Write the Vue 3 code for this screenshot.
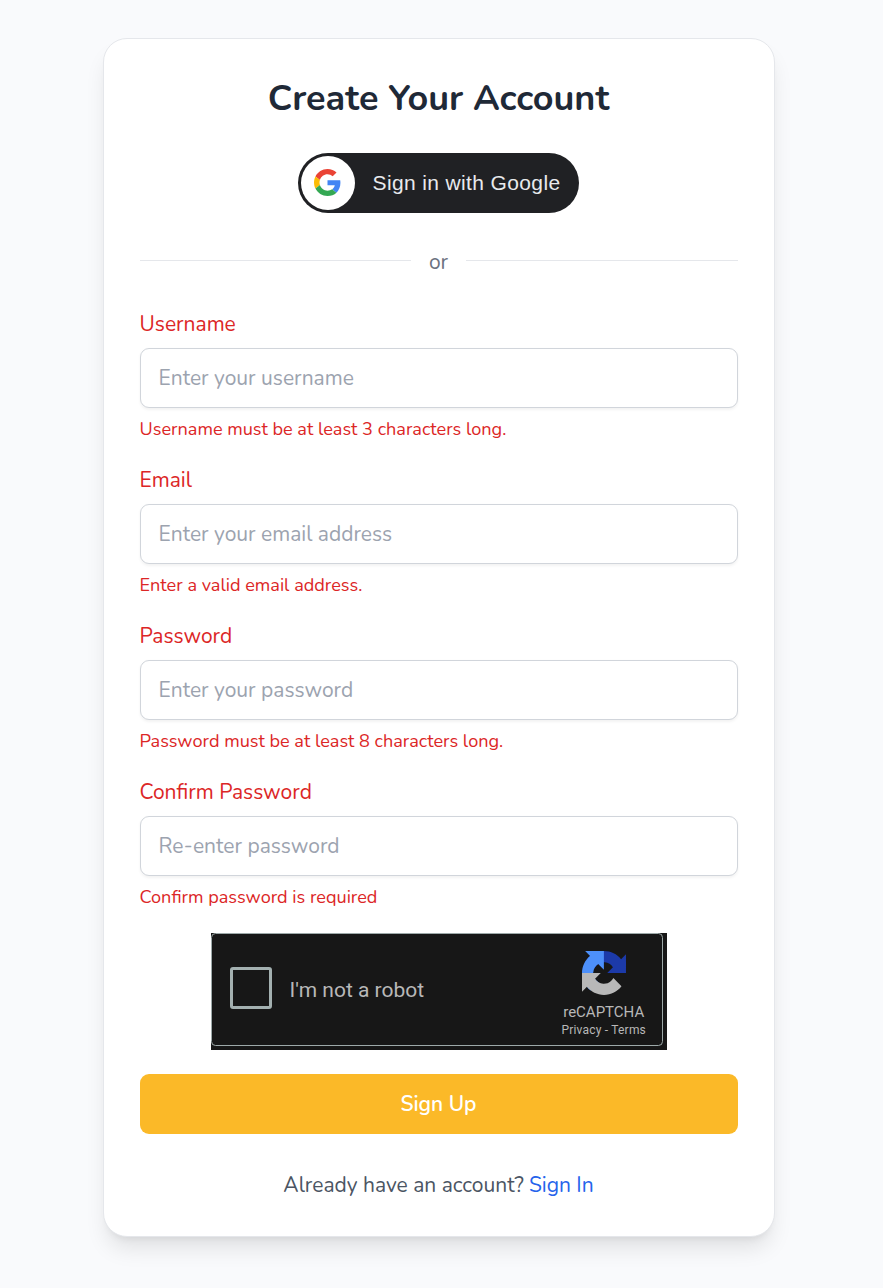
<script setup>
const fields = [
  { id: 'username', type: 'text', label: 'Username', placeholder: 'Enter your username', error: 'Username must be at least 3 characters long.' },
  { id: 'email', type: 'email', label: 'Email', placeholder: 'Enter your email address', error: 'Enter a valid email address.' },
  { id: 'password', type: 'password', label: 'Password', placeholder: 'Enter your password', error: 'Password must be at least 8 characters long.' },
  { id: 'confirm', type: 'password', label: 'Confirm Password', placeholder: 'Re-enter password', error: 'Confirm password is required' },
]
</script>

<template>
  <main class="page">
    <section class="card">
      <h1 class="title">Create Your Account</h1>

      <button class="google" type="button">
        <span class="google-icon">
          <svg viewBox="0 0 48 48" width="27" height="27">
            <path fill="#EA4335" d="M24 9.5c3.54 0 6.71 1.22 9.21 3.6l6.85-6.85C35.9 2.38 30.47 0 24 0 14.62 0 6.51 5.38 2.56 13.22l7.98 6.19C12.43 13.72 17.74 9.5 24 9.5z" />
            <path fill="#4285F4" d="M46.98 24.55c0-1.57-.15-3.09-.38-4.55H24v9.02h12.94c-.58 2.96-2.26 5.48-4.78 7.18l7.73 6c4.51-4.18 7.09-10.36 7.09-17.65z" />
            <path fill="#FBBC05" d="M10.53 28.59c-.48-1.45-.76-2.99-.76-4.59s.27-3.14.76-4.59l-7.98-6.19C.92 16.46 0 20.12 0 24c0 3.88.92 7.54 2.56 10.78l7.97-6.19z" />
            <path fill="#34A853" d="M24 48c6.48 0 11.93-2.13 15.89-5.81l-7.73-6c-2.15 1.45-4.92 2.3-8.16 2.3-6.26 0-11.57-4.22-13.47-9.91l-7.98 6.19C6.51 42.62 14.62 48 24 48z" />
          </svg>
        </span>
        <span class="google-label">Sign in with Google</span>
      </button>

      <div class="divider"><span class="line"></span><span class="or">or</span><span class="line"></span></div>

      <form novalidate @submit.prevent>
        <div v-for="f in fields" :key="f.id" class="field">
          <label class="label" :for="f.id">{{ f.label }}</label>
          <input :id="f.id" class="input" :type="f.type" :placeholder="f.placeholder" />
          <p class="error">{{ f.error }}</p>
        </div>

        <div class="captcha">
          <div class="captcha-box">
            <span class="check"></span>
            <span class="robot">I'm not a robot</span>
            <div class="brand">
              <svg viewBox="0 0 64 64" width="44" height="44">
                <path fill="#1c3aa9" d="M64 31.955l-.033-1.37V4.687l-7.16 7.16C50.948 4.674 42.033.093 32.05.093c-10.4 0-19.622 4.96-25.458 12.64l11.736 11.86a15.55 15.55 0 0 1 4.754-5.334c2.05-1.6 4.952-2.906 8.968-2.906.485 0 .86.057 1.135.163 4.976.393 9.288 3.14 11.828 7.124l-8.307 8.307L64 31.953" />
                <path fill="#4d90fa" d="M31.862.094l-1.37.033H4.594l7.16 7.16C4.58 13.147 0 22.06 0 32.046c0 10.4 4.96 19.622 12.64 25.458L24.5 45.768a15.55 15.55 0 0 1-5.334-4.754c-1.6-2.05-2.906-4.952-2.906-8.968 0-.485.057-.86.163-1.135.393-4.976 3.14-9.288 7.124-11.828l8.307 8.307L31.86.095" />
                <path fill="#b8b8b8" d="M.001 32.045l.033 1.37v25.898l7.16-7.16c5.86 7.173 14.774 11.754 24.76 11.754 10.4 0 19.622-4.96 25.458-12.64l-11.736-11.86a15.55 15.55 0 0 1-4.754 5.334c-2.05 1.6-4.952 2.906-8.968 2.906-.485 0-.86-.057-1.135-.163-4.976-.393-9.288-3.14-11.828-7.124l8.307-8.307c-10.522.04-22.4.066-27.295-.005" />
              </svg>
              <span class="brand-name">reCAPTCHA</span>
              <span class="brand-links">Privacy - Terms</span>
            </div>
          </div>
        </div>

        <button class="submit" type="submit">Sign Up</button>
      </form>

      <p class="footer"><span>Already have an account?</span><a class="signin">Sign In</a></p>
    </section>
  </main>
</template>

<style>
body {
  background: #f9fafb;
}
</style>

<style scoped>
.page {
  box-sizing: border-box;
  height: 1288px;
  padding: 38px 108.5px 51px 102.5px;
  overflow: hidden;
  background: #f9fafc;
  font-family: Nunito, Lato, "Open Sans", sans-serif;
  font-size: 21px;
  line-height: 30px;
}
.card {
  box-sizing: border-box;
  height: 1199px;
  padding: 36px;
  border: 1px solid #e5e7eb;
  border-radius: 24px;
  background: #fff;
  box-shadow: 0 15px 22.5px -4.5px rgba(0, 0, 0, 0.1), 0 6px 9px -6px rgba(0, 0, 0, 0.1);
  display: flex;
  flex-direction: column;
}
.title {
  margin: 0;
  height: 48px;
  font-size: 36px;
  line-height: 48px;
  font-weight: 700;
  color: #1f2937;
  text-align: center;
  white-space: nowrap;
}
.google {
  align-self: center;
  box-sizing: border-box;
  width: 281px;
  height: 60px;
  margin: 30px 1px 0 0;
  padding: 3px;
  border: 0;
  border-radius: 30px;
  background: #202124;
  display: flex;
  align-items: center;
}
.google-icon {
  width: 54px;
  height: 54px;
  border-radius: 50%;
  background: #fff;
  display: flex;
  align-items: center;
  justify-content: center;
}
.google-icon svg {
  margin: 0 1px 1px 0;
}
.google-label {
  margin-left: 18px;
  font: 21px "Liberation Sans", Arial, sans-serif;
  letter-spacing: 0.37px;
  color: #e8eaed;
  white-space: nowrap;
}
.divider {
  display: flex;
  align-items: center;
  height: 30px;
  margin-top: 32px;
}
.line {
  flex: 1;
  height: 1px;
  background: #e5e7eb;
}
.or {
  margin: 3px 18px 0;
  color: #6b7280;
}
form {
  margin-top: 34px;
}
.field {
  height: 156px;
}
.label {
  display: block;
  height: 39px;
  color: #dc2626;
  line-height: 30px;
}
.input {
  display: block;
  box-sizing: border-box;
  width: 100%;
  height: 60px;
  padding: 0 18px;
  border: 1px solid #d1d5db;
  border-radius: 9px;
  background: #fff;
  box-shadow: 0 1.5px 3px rgba(0, 0, 0, 0.05);
  font: inherit;
  outline: none;
}
.input::placeholder {
  color: #9ca3af;
  opacity: 1;
}
.error {
  margin: 6px 0 0;
  font-size: 18.13px;
  line-height: 30px;
  color: #dc2626;
}
.captcha {
  width: 456px;
  height: 117px;
  margin: 0 auto;
  background: #171717;
}
.captcha-box {
  box-sizing: border-box;
  width: 452px;
  height: 113px;
  border: 1px solid #9da9a9;
  border-radius: 4.5px;
  background: #171717;
  display: flex;
  align-items: center;
  padding: 0 15.5px 0 18px;
  font-family: Roboto, sans-serif;
  color: #b8b8b8;
}
.check {
  box-sizing: border-box;
  width: 42px;
  height: 42px;
  margin-top: -3px;
  border: 3px solid #a3b0b0;
  border-radius: 3px;
}
.robot {
  margin-left: 18px;
}
.brand {
  margin: 10px 0 0 auto;
  display: flex;
  flex-direction: column;
  align-items: center;
}
.brand-name {
  margin-top: 8px;
  font-size: 15px;
  line-height: 18px;
}
.brand-links {
  font-size: 12px;
  line-height: 18px;
  letter-spacing: 0.2px;
}
.submit {
  display: block;
  width: 100%;
  height: 60px;
  margin-top: 24px;
  border: 0;
  border-radius: 9px;
  background: #fbb928;
  color: #fff;
  font: 600 21px/30px Nunito, Lato, sans-serif;
}
.footer {
  margin: 36px 0 0;
  display: flex;
  justify-content: center;
  gap: 5px;
  color: #4b5563;
}
.signin {
  color: #2563eb;
}
</style>
